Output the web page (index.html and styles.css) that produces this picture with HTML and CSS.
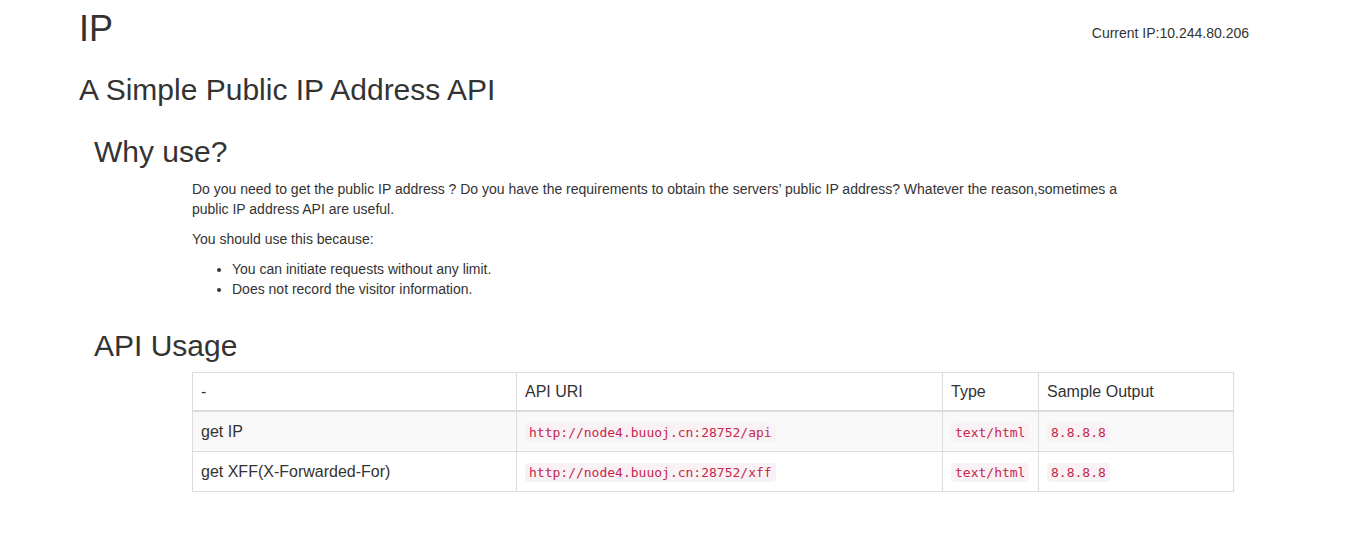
FILE: index.html
```html
<!DOCTYPE html>
<html lang="en">
<head>
<meta charset="utf-8">
<title>IP</title>
<link rel="stylesheet" href="styles.css">
</head>
<body>
<div class="page">
  <header class="top">
    <h1 class="title">IP</h1>
    <div class="current">Current IP:10.244.80.206</div>
  </header>
  <h2 class="subtitle">A Simple Public IP Address API</h2>

  <section class="section">
    <h2 class="section-title">Why use?</h2>
    <div class="section-body">
      <p class="text">Do you need to get the public IP address ? Do you have the requirements to obtain the servers’ public IP address? Whatever the reason,sometimes a public IP address API are useful.</p>
      <p class="text">You should use this because:</p>
      <ul class="list">
        <li>You can initiate requests without any limit.</li>
        <li>Does not record the visitor information.</li>
      </ul>
    </div>
  </section>

  <section class="section">
    <h2 class="section-title usage">API Usage</h2>
    <div class="section-body">
      <table class="api-table">
        <colgroup>
          <col class="c1"><col class="c2"><col class="c3"><col class="c4">
        </colgroup>
        <thead>
          <tr><th>-</th><th>API URI</th><th>Type</th><th>Sample Output</th></tr>
        </thead>
        <tbody>
          <tr>
            <td>get IP</td>
            <td><code>http://node4.buuoj.cn:28752/api</code></td>
            <td><code>text/html</code></td>
            <td><code>8.8.8.8</code></td>
          </tr>
          <tr>
            <td>get XFF(X-Forwarded-For)</td>
            <td><code>http://node4.buuoj.cn:28752/xff</code></td>
            <td><code>text/html</code></td>
            <td><code>8.8.8.8</code></td>
          </tr>
        </tbody>
      </table>
    </div>
  </section>
</div>
</body>
</html>
```

FILE: styles.css
```css
* { box-sizing: border-box; }
html, body { margin: 0; padding: 0; background: #fff; }
body {
  font-family: "Liberation Sans", Arial, Helvetica, sans-serif;
  font-size: 14px;
  line-height: 20px;
  color: #333;
}
.page {
  padding: 0 106px 0 79px;
}
.top {
  display: flex;
  justify-content: space-between;
  align-items: flex-start;
}
.title {
  margin: 9px 0 0 0;
  font-size: 36px;
  line-height: 40px;
  font-weight: 500;
}
.current {
  margin-top: 23px;
}
.subtitle {
  margin: 24px 0 0 0;
  font-size: 30px;
  line-height: 33px;
  font-weight: 500;
}
.section {
  padding-left: 15px;
}
.section-title {
  margin: 29px 0 11px 0;
  font-size: 30px;
  line-height: 33px;
  font-weight: 500;
}
.section-title.usage {
  margin-top: 30px;
  margin-bottom: 10px;
}
.section-body {
  padding-left: 98px;
}
.text {
  margin: 0 0 10px 0;
  max-width: 950px;
}
.list {
  margin: 0;
  padding-left: 40px;
}
.api-table {
  border-collapse: collapse;
  border-spacing: 0;
  table-layout: fixed;
  width: 1041px;
  font-size: 16px;
  border: 1px solid #ddd;
}
.c1 { width: 324px; }
.c2 { width: 426px; }
.c3 { width: 96px; }
.c4 { width: 195px; }
.api-table th,
.api-table td {
  text-align: left;
  vertical-align: top;
  border: 1px solid #ddd;
  padding: 8px;
  line-height: 21px;
}
.api-table th {
  font-weight: normal;
  border-bottom: 2px solid #ddd;
}
.api-table td {
  padding: 9px 8px 8px;
}
.api-table tbody tr:nth-child(odd) {
  background: #f9f9f9;
}
code {
  font-family: "DejaVu Sans Mono", "Liberation Mono", monospace;
  font-size: 13px;
  padding: 2px 4px;
  color: #c7254e;
  background: #f9f2f4;
  border-radius: 4px;
}
```
